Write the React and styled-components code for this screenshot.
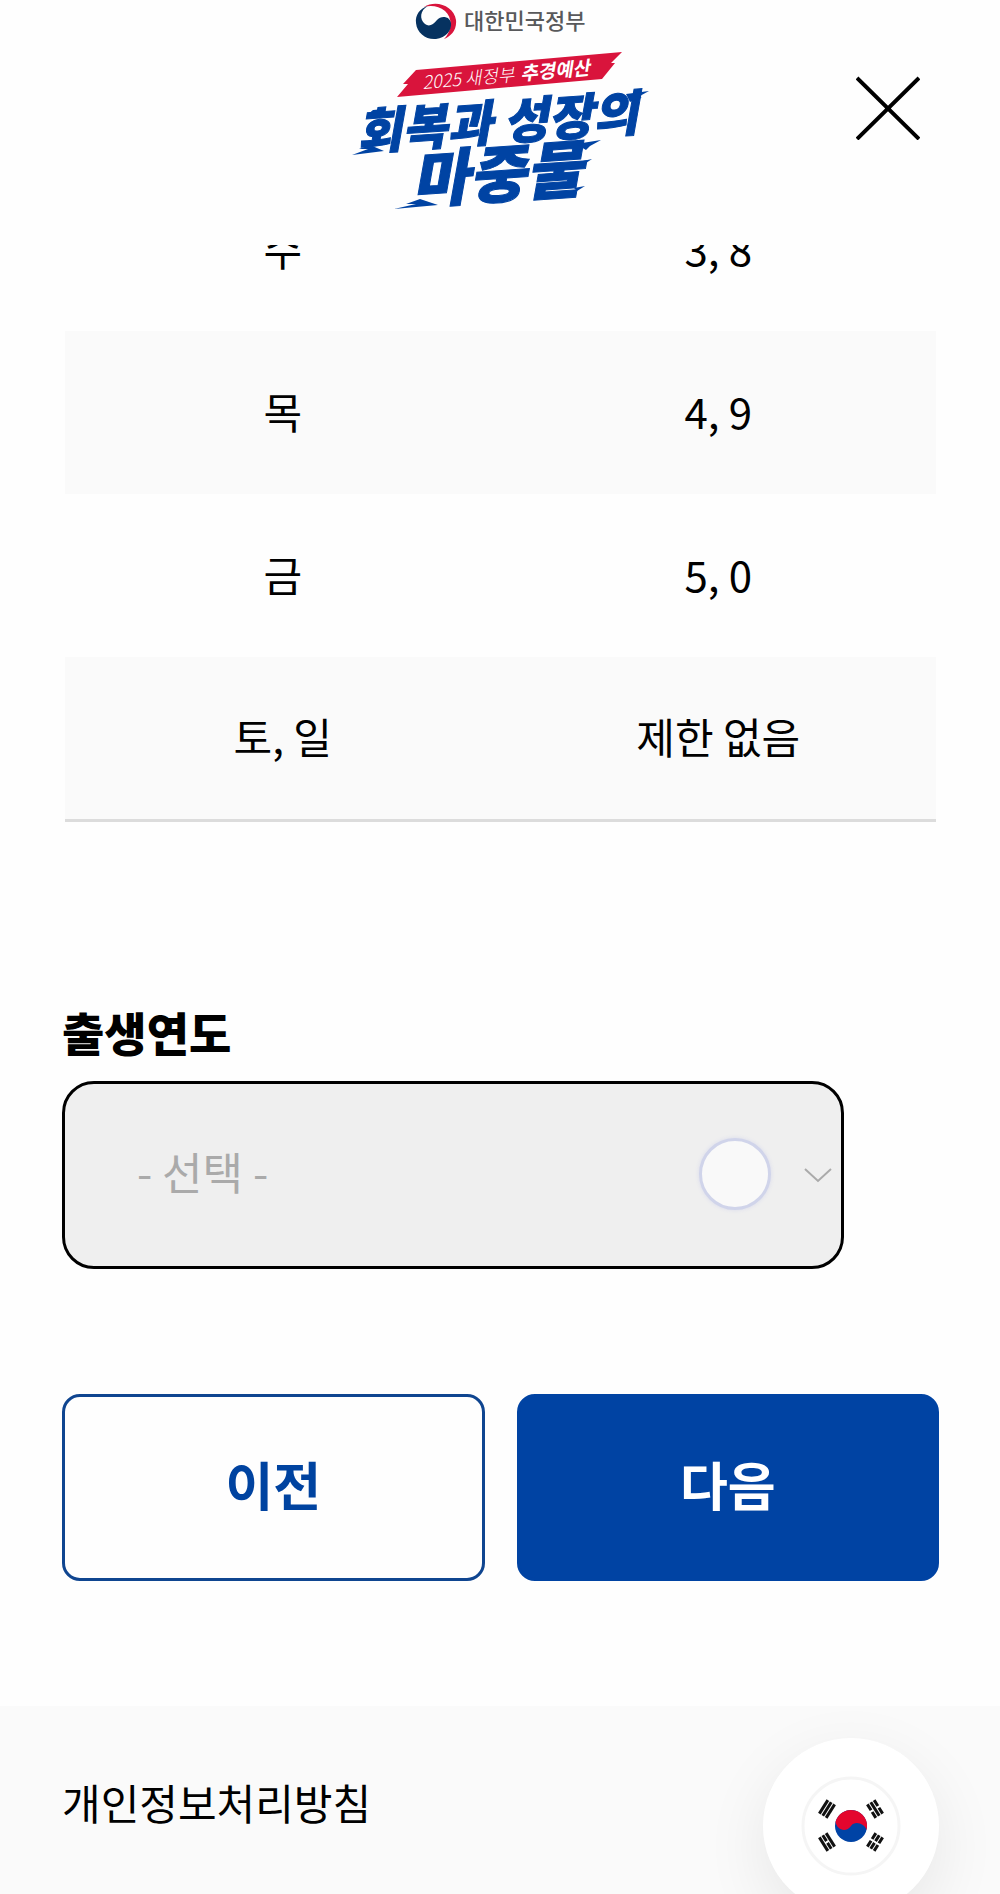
import { useState } from "react";
import styled, { createGlobalStyle } from "styled-components";

const GlobalStyle = createGlobalStyle`
    * {
        box-sizing: border-box;
    }

    body {
        margin: 0;
        background-color: #fefefe;
        color: #000;
        font-family: "Noto Sans CJK KR", "Noto Sans", sans-serif;
        font-size: 42px;
    }
`;

const Page = styled.div`
    display: flex;
    flex-direction: column;
    min-height: 100vh;
`;

const Header = styled.header`
    position: sticky;
    top: 0;
    z-index: 2;
    display: grid;
    grid-template-columns: 1fr auto 1fr;
    align-items: start;
    padding: 0 72px 25px;
    background-color: #fefefe;
`;

const HomeLink = styled.a`
    grid-column: 2;
    display: block;

    svg {
        display: block;
    }
`;

const CloseButton = styled.button`
    justify-self: end;
    margin-top: 68px;
    padding: 8px;
    border: none;
    background: none;
    line-height: 0;
    cursor: pointer;
`;

const Main = styled.main`
    margin-top: -77px;
    padding: 0 61px 125px 62px;
`;

const TableWrap = styled.div`
    padding: 0 3px;
`;

const DayTable = styled.table`
    width: 100%;
    border-collapse: collapse;
    table-layout: fixed;
    border-bottom: 3px solid #dcdcdc;
`;

const DayRow = styled.tr`
    background-color: ${props => props.$shaded ? "#fafafa" : "transparent"};
`;

const DayCell = styled.td`
    height: 163px;
    padding: 0 0 4px;
    text-align: center;
    line-height: 60px;
`;

const FieldLabel = styled.label`
    display: block;
    margin-top: 177px;
    font-size: 46px;
    font-weight: 900;
    line-height: 64px;
`;

const SelectWrap = styled.div`
    position: relative;
    width: calc(100% - 95px);
    margin-top: 18px;
`;

const YearSelect = styled.select`
    display: block;
    width: 100%;
    height: 188px;
    padding: 0 72px 8px;
    border: 3px solid #000;
    border-radius: 32px;
    appearance: none;
    background-color: #efefef;
    color: #aaa;
    font-family: inherit;
    font-size: 44px;
`;

const Chevron = styled.svg`
    position: absolute;
    top: 50%;
    right: 12px;
    margin-top: -8px;
    pointer-events: none;
`;

const TouchDot = styled.span`
    position: absolute;
    top: 50%;
    right: 73px;
    width: 72px;
    height: 72px;
    margin-top: -37px;
    border: 3px solid #d0d4ea;
    border-radius: 50%;
    background-color: #f9f9f9;
    box-shadow: 0 0 4px #d8daec;
    pointer-events: none;
`;

const ButtonRow = styled.div`
    display: grid;
    grid-template-columns: 1fr 1fr;
    gap: 32px;
    margin-top: 125px;
`;

const StepButton = styled.button`
    height: 187px;
    padding: 0 0 8px;
    border: 3px solid;
    border-color: ${props => props.$filled ? "#0043a3" : "#0f4590"};
    border-radius: 18px;
    background-color: ${props => props.$filled ? "#0043a3" : "#fefefe"};
    color: ${props => props.$filled ? "#fff" : "#0043a0"};
    font-family: inherit;
    font-size: 52px;
    font-weight: 700;
    cursor: pointer;
`;

const Footer = styled.footer`
    flex: 1;
    padding: 64px 62px 60px;
    background-color: #fafafa;
    line-height: 64px;
`;

const FooterLink = styled.a`
    color: #000;
    text-decoration: none;
`;

const LanguageButton = styled.button`
    position: fixed;
    right: 61px;
    bottom: -20px;
    display: grid;
    place-items: center;
    width: 176px;
    height: 176px;
    padding: 0;
    border: none;
    border-radius: 50%;
    background-color: #fff;
    box-shadow: 0 20px 64px rgba(0, 0, 0, 0.08);
    cursor: pointer;
`;

const LogoText = styled.text`
    font-family: "Noto Sans CJK KR", sans-serif;
    font-size: ${props => props.$size}px;
    font-weight: ${props => props.$weight};
    font-style: ${props => props.$slanted ? "italic" : "normal"};
`;

const days = [
    { day: "수", digits: "3, 8" },
    { day: "목", digits: "4, 9" },
    { day: "금", digits: "5, 0" },
    { day: "토, 일", digits: "제한 없음" },
];

const years = Array.from({ length: 100 }, (_, i) => 2007 - i);

const Logo = () => (
    <svg width="320" height="220" viewBox="0 0 320 220" role="img" aria-label="대한민국정부 회복과 성장의 마중물">
        <path d="M84 7 C96 -1 114 6 116 20 C117 30 111 36 104 39 C112 31 113 18 105 11 C99 6 91 5 84 7Z" fill="#d9143c" />
        <path d="M88 6 C80 8 75 15 76 23 C77 33 86 40 96 39 C106 38 112 30 111 23 C110 16 101 15 97 20 C93 25 89 27 85 24 C79 19 80 10 88 6Z" fill="#063260" />
        <LogoText $size={22} $weight={500} x="124" y="29" fill="#58595b">대한민국정부</LogoText>

        <path d="M76 70 L282 52 L271 63 L275 63 L262 79 L57 97 L68 84 L63 84Z" fill="#d9143c" />
        <g transform="translate(83 89) rotate(-5)" fill="#fff">
            <LogoText $size={18} $weight={300} $slanted>2025 새정부</LogoText>
            <LogoText $size={19} $weight={700} $slanted x="98">추경예산</LogoText>
        </g>

        <g fill="#0043a3" stroke="#0043a3" strokeWidth="1">
            <LogoText $size={49} $weight={900} $slanted transform="translate(18 150) rotate(-4)">회복과 성장의</LogoText>
            <LogoText $size={62} $weight={900} $slanted transform="translate(73 203) rotate(-4)">마중물</LogoText>
        </g>
        {/* speed lines at the ends of the strokes */}
        <g fill="#0043a3">
            <path d="M12 155 L28 149 L19 149 L30 145 L44 151Z" />
            <path d="M27 115 L33 110 L44 109 L40 113Z" />
            <path d="M286 94 L309 91 L298 97 L302 97 L290 102Z" />
            <path d="M54 209 L76 204 L66 204 L80 199 L98 205Z" />
            <path d="M236 144 L261 140 L250 146 L246 150Z" />
            <path d="M238 162 L252 159 L243 165Z" />
            <path d="M234 188 L245 186 L237 191Z" />
        </g>
    </svg>
);

const bars = [-4, 0, 4];

// broken lists the bars that are split in the middle
const Trigram = ({ x, y, angle, broken }) => (
    <g transform={`translate(${x} ${y}) rotate(${angle})`}>
        {bars.map((bar, i) => broken.includes(i)
            ? <path key={bar} d={`M${bar} -8V-1M${bar} 1V8`} stroke="#111" strokeWidth="3" />
            : <path key={bar} d={`M${bar} -8V8`} stroke="#111" strokeWidth="3" />)}
    </g>
);

const KoreanFlag = () => (
    <svg width="100" height="100" viewBox="-50 -50 100 100" aria-hidden="true">
        <circle r="48" fill="#fff" stroke="#f5f5f5" strokeWidth="3" />
        <circle r="16" fill="#0043a5" />
        <path d="M-15.5 -4 A16 16 0 0 1 15.5 4 C14 -2 4 -6 0 0 C-5 7 -14 4 -15.5 -4Z" fill="#e4062e" />
        <Trigram x={-24} y={-17} angle={32} broken={[]} />
        <Trigram x={24} y={-17} angle={-32} broken={[0, 2]} />
        <Trigram x={-24} y={16} angle={-32} broken={[1]} />
        <Trigram x={24} y={16} angle={32} broken={[0, 1, 2]} />
    </svg>
);

const App = () => {
    const [year, setYear] = useState("");

    return (
        <Page>
            <GlobalStyle />
            <Header>
                <HomeLink href="#home"><Logo /></HomeLink>
                <CloseButton type="button" aria-label="닫기">
                    <svg width="64" height="64" viewBox="0 0 64 64">
                        <path d="M1 2L63 63M63 2L1 63" stroke="#000" strokeWidth="4" />
                    </svg>
                </CloseButton>
            </Header>
            <Main>
                <TableWrap>
                    <DayTable>
                        <tbody>
                            {days.map((item, i) => (
                                <DayRow key={item.day} $shaded={i % 2 === 1}>
                                    <DayCell>{item.day}</DayCell>
                                    <DayCell>{item.digits}</DayCell>
                                </DayRow>
                            ))}
                        </tbody>
                    </DayTable>
                </TableWrap>
                <FieldLabel htmlFor="birthYear">출생연도</FieldLabel>
                <SelectWrap>
                    <YearSelect id="birthYear" value={year} onChange={e => setYear(e.target.value)}>
                        <option value="">- 선택 -</option>
                        {years.map(y => <option key={y} value={y}>{y}</option>)}
                    </YearSelect>
                    <TouchDot />
                    <Chevron width="28" height="16" viewBox="0 0 28 16" fill="none">
                        <path d="M1 2L14 14L27 2" stroke="#aaa" strokeWidth="2" />
                    </Chevron>
                </SelectWrap>
                <ButtonRow>
                    <StepButton type="button">이전</StepButton>
                    <StepButton type="button" $filled>다음</StepButton>
                </ButtonRow>
            </Main>
            <Footer>
                <FooterLink href="#privacy">개인정보처리방침</FooterLink>
            </Footer>
            <LanguageButton type="button" aria-label="한국어">
                <KoreanFlag />
            </LanguageButton>
        </Page>
    );
};

export default App;
